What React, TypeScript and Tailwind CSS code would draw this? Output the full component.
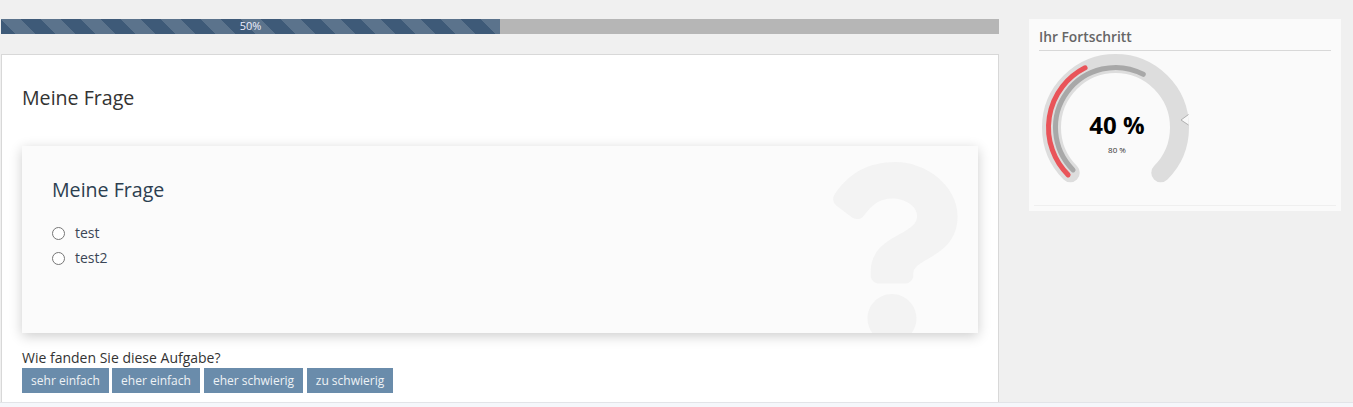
import { FaQuestion } from "react-icons/fa";

function Gauge() {
  const cx = 75.5, cy = 76.5;
  const pt = (r: number, deg: number) => {
    const a = (deg * Math.PI) / 180;
    return `${(cx + r * Math.sin(a)).toFixed(2)} ${(cy - r * Math.cos(a)).toFixed(2)}`;
  };
  const arc = (r: number, from: number, to: number) =>
    `M ${pt(r, from)} A ${r} ${r} 0 ${to - from > 180 ? 1 : 0} 1 ${pt(r, to)}`;
  return (
    <div className="relative w-[160px] h-[140px] ml-[11px]">
      <svg width="160" height="140" viewBox="0 0 160 140" className="block">
        <path d={arc(64, -135, 135)} fill="none" stroke="#dddddd" strokeWidth="19" strokeLinecap="round" />
        <path d={arc(60, -135, 27.6)} fill="none" stroke="#a8a8a8" strokeWidth="5" strokeLinecap="round" />
        <path d={arc(67, -135, -27)} fill="none" stroke="#e95459" strokeWidth="5" strokeLinecap="round" />
        <path d="M148.5 63.5 L141 69 L148.5 74" fill="#f9f9f9" stroke="#b0b0b0" strokeWidth="1" />
      </svg>
      <div className="absolute left-[17px] w-[120px] top-[59px] text-center text-[24px] leading-[30px] font-bold text-black">
        40 %
      </div>
      <div className="absolute left-[17px] w-[120px] top-[93px] text-center text-[8px] leading-[12px] text-[#333]">80 %</div>
    </div>
  );
}

export default function App() {
  const btn = "h-[25px] flex items-center justify-center bg-[#6a8cab] text-[12px] text-[#eef2f5]";
  return (
    <div className="w-[1353px] h-[407px] overflow-hidden bg-[#f5f7fb] font-['Open_Sans',sans-serif]">
      <div className="h-[403px] bg-[#f0f0f0] border-b border-[#e2e4e8] pt-[19px] flex items-start overflow-hidden">
        <main className="w-[998px] ml-[1px] shrink-0">
          <div className="h-[15px] bg-[#b6b6b6]">
            <div className="h-full w-[499px] flex items-center justify-center text-[11px] text-[#eef] bg-[#3e5a78] bg-[linear-gradient(45deg,rgba(255,255,255,.15)_25%,transparent_25%,transparent_50%,rgba(255,255,255,.15)_50%,rgba(255,255,255,.15)_75%,transparent_75%,transparent)] bg-[length:40px_40px]">
              50%
            </div>
          </div>
          <div className="mt-[20px] h-[360px] bg-white border border-[#d8d8d8] px-[20px] pt-[29px]">
            <h1 className="text-[19.6px] leading-[27px] text-[#333]">Meine Frage</h1>
            <div className="relative overflow-hidden mt-[35px] h-[187px] bg-[#fbfbfb] pl-[30px] pt-[30px] shadow-[0_3px_12px_rgba(0,0,0,0.2)]">
              <FaQuestion className="absolute left-[802px] top-[16px] w-[136px] h-[181px] text-[#f3f3f3]" />
              <h2 className="relative text-[19.6px] leading-[27px] text-[#2c3e50]">Meine Frage</h2>
              <div className="relative mt-[18px] flex flex-col text-[14px] text-[#3a4656]">
                <label className="h-[25px] flex items-center gap-[10px]">
                  <span className="w-[13px] h-[13px] rounded-full border border-[#767676] bg-white" />
                  <span className="-mt-[2px]">test</span>
                </label>
                <label className="h-[25px] flex items-center gap-[10px]">
                  <span className="w-[13px] h-[13px] rounded-full border border-[#767676] bg-white" />
                  <span className="-mt-[2px]">test2</span>
                </label>
              </div>
            </div>
            <p className="mt-[15px] text-[14px] leading-[20px] text-[#333]">Wie fanden Sie diese Aufgabe?</p>
            <div className="flex">
              <div className={btn + " w-[87px]"}>sehr einfach</div>
              <div className={btn + " w-[88px] ml-[3px]"}>eher einfach</div>
              <div className={btn + " w-[99px] ml-[4px]"}>eher schwierig</div>
              <div className={btn + " w-[86px] ml-[4px]"}>zu schwierig</div>
            </div>
          </div>
        </main>
        <aside className="ml-[30px] w-[312px] h-[192px] bg-[#fafafa] pt-[9px] flex flex-col">
          <div className="mx-[10px] h-[23px] border-b border-[#d8d8d8] text-[13.8px] leading-[18px] font-semibold text-[#666]">Ihr Fortschritt</div>
          <Gauge />
          <div className="mt-[14px] mx-[5px] border-t border-[#efefef]" />
        </aside>
      </div>
    </div>
  );
}
